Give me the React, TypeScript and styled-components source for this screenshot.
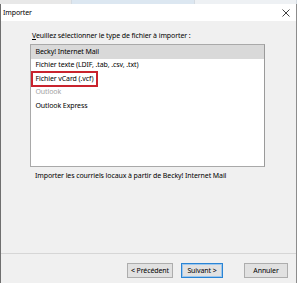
import styled, { createGlobalStyle } from 'styled-components';

const GlobalStyle = createGlobalStyle`
  html, body {
    margin: 0;
    padding: 0;
    background: #f0f0f0;
  }
  body {
    font-family: "Noto Sans", "DejaVu Sans", sans-serif;
    font-size: 7px;
    letter-spacing: -0.1px;
    color: #000000;
  }
`;

const FORMATS = [
  { name: 'Becky! Internet Mail', selected: true },
  { name: 'Fichier texte (LDIF, .tab, .csv, .txt)' },
  { name: 'Fichier vCard (.vcf)', marked: true },
  { name: 'Outlook', disabled: true },
  { name: 'Outlook Express' },
];

const Window = styled.div`
  width: 297px;
  height: 283px;
  display: flex;
  flex-direction: column;
  overflow: hidden;
`;

const Backdrop = styled.div`
  height: 4px;
  display: flex;
  flex: none;
`;

const BackdropPart = styled.div<{ $bg: string; $w: string }>`
  width: ${(p) => p.$w};
  background: ${(p) => p.$bg};
  border-right: 1px solid #d4dbe2;
`;

const Frame = styled.div`
  flex: 1;
  display: flex;
  flex-direction: column;
  border-left: 1px solid #6f6f6f;
  border-right: 1px solid #8c8c8c;
  min-height: 0;
`;

const TitleBar = styled.div`
  height: 17px;
  flex: none;
  background: #ffffff;
  display: flex;
  align-items: center;
  justify-content: space-between;
  padding: 0 6px 0 2px;
`;

const Body = styled.div`
  flex: 1;
  display: flex;
  flex-direction: column;
  line-height: 10px;
`;

const Prompt = styled.div`
  margin: 10px 0 0 31px;
  height: 10px;
`;

const ListBox = styled.div`
  margin: 3px 0 0 29px;
  width: 235px;
  height: 123px;
  box-sizing: border-box;
  border: 1px solid #a9a9a9;
  border-right-color: #9a9a9a;
  background: #ffffff;
`;

const Row = styled.div<{ $selected?: boolean; $disabled?: boolean }>`
  height: 13.5px;
  display: flex;
  align-items: center;
  background: ${(p) => (p.$selected ? '#d9d9d9' : 'transparent')};
  color: ${(p) => (p.$disabled ? '#a3a3a3' : '#000000')};
`;

const RowLabel = styled.span<{ $marked?: boolean }>`
  position: relative;
  padding: 0 4.5px;
  white-space: nowrap;

  ${(p) =>
    p.$marked
      ? `&::after {
          content: '';
          position: absolute;
          left: 0;
          right: 0;
          top: -3px;
          bottom: -3px;
          border: 2px solid #c9232d;
        }`
      : ''}
`;

const Description = styled.div`
  margin: 4px 0 0 34px;
`;

const Spacer = styled.div`
  flex: 1;
`;

const Separator = styled.div`
  height: 1px;
  background: #d6d6d6;
  flex: none;
`;

const ButtonRow = styled.div`
  display: flex;
  align-items: center;
  padding: 8.5px 0 5.5px 126px;
  height: 15px;
  flex: none;
`;

const Button = styled.button<{ $w: number; $default?: boolean; $gap?: number }>`
  width: ${(p) => p.$w}px;
  height: 15px;
  margin-right: ${(p) => p.$gap ?? 0}px;
  padding: 0;
  box-sizing: border-box;
  font-family: inherit;
  font-size: 7px;
  letter-spacing: -0.1px;
  color: #000000;
  background: #e1e1e1;
  border: 1px solid ${(p) => (p.$default ? '#2a84d4' : '#adadad')};
  box-shadow: ${(p) => (p.$default ? 'inset 0 0 0 1px #9cc7ee' : 'none')};
`;

const CloseIcon = () => (
  <svg width="8" height="8" viewBox="0 0 8 8">
    <path d="M0.5 0.5 L7.5 7.5 M7.5 0.5 L0.5 7.5" stroke="#2a2a2a" strokeWidth="0.9" />
  </svg>
);

export default function App() {
  return (
    <>
      <GlobalStyle />
      <Window>
        <Backdrop>
          <BackdropPart $bg="#e8e8e8" $w="72px" />
          <BackdropPart $bg="#dce7f1" $w="123px" />
          <BackdropPart $bg="#eef1f4" $w="102px" />
        </Backdrop>
        <Frame>
          <TitleBar>
            <span>Importer</span>
            <CloseIcon />
          </TitleBar>
          <Body>
            <Prompt>
              <u>V</u>euillez sélectionner le type de fichier à importer :
            </Prompt>
            <ListBox>
              {FORMATS.map((f) => (
                <Row key={f.name} $selected={f.selected} $disabled={f.disabled}>
                  <RowLabel $marked={f.marked}>{f.name}</RowLabel>
                </Row>
              ))}
            </ListBox>
            <Description>Importer les courriels locaux à partir de Becky! Internet Mail</Description>
            <Spacer />
            <Separator />
            <ButtonRow>
              <Button $w={46} $gap={8}>&lt; Précédent</Button>
              <Button $w={42} $gap={21} $default>Suivant &gt;</Button>
              <Button $w={44}>Annuler</Button>
            </ButtonRow>
          </Body>
        </Frame>
      </Window>
    </>
  );
}
